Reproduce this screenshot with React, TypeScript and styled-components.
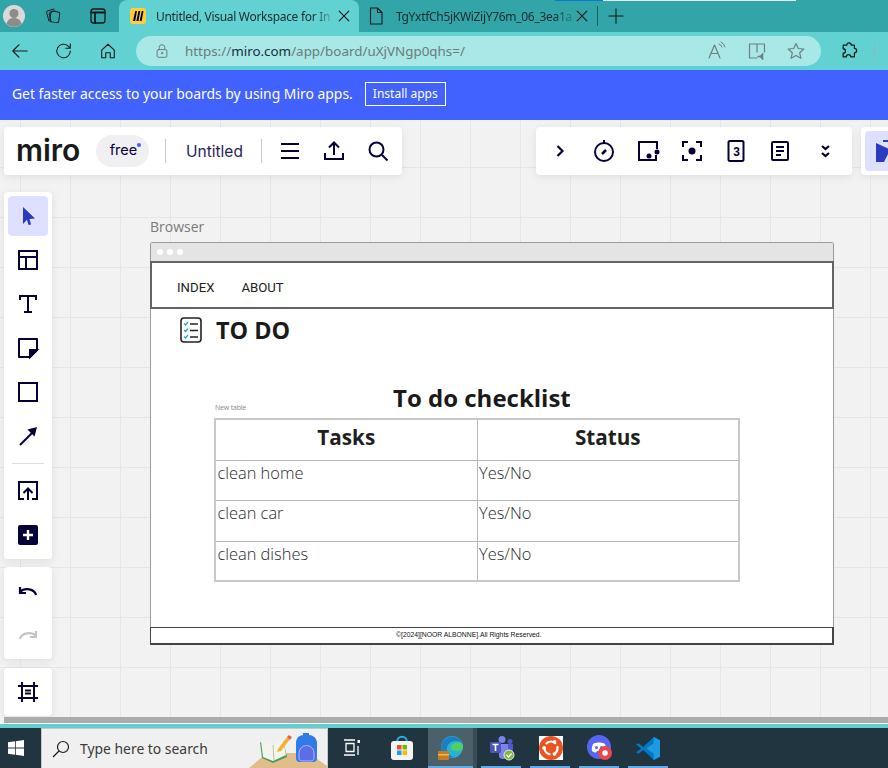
import * as React from 'react';
import styled, { createGlobalStyle } from 'styled-components';

const navy = '#050038';

const GlobalStyle = createGlobalStyle`
  html, body { margin: 0; padding: 0; background: #f2f2f2; }
  * { box-sizing: border-box; }
  table { border-spacing: 0; }
`;

const Screen = styled.div`
  width: 888px;
  height: 768px;
  display: flex;
  flex-direction: column;
  overflow: hidden;
  font-family: 'Open Sans', sans-serif;
`;

/* browser chrome */
const TabStrip = styled.div`
  position: relative;
  height: 32px;
  flex: none;
  display: flex;
  align-items: stretch;
  background: #31a5a8;
`;

const LoadBar = styled.div`
  position: absolute;
  top: 0;
  left: 555px;
  width: 241px;
  height: 1px;
  background: linear-gradient(90deg, #0a78d8 0 48px, #e8e8e8 48px);
`;

const StripButton = styled.div<{ $w: number }>`
  width: ${(p) => p.$w}px;
  flex: none;
  display: flex;
  align-items: center;
  justify-content: center;
`;

const Tab = styled.div<{ $active?: boolean; $w: number; $pl: number }>`
  width: ${(p) => p.$w}px;
  flex: none;
  display: flex;
  align-items: center;
  padding-left: ${(p) => p.$pl}px;
  border-radius: 8px 8px 0 0;
  background: ${(p) => (p.$active ? '#62d1d1' : 'transparent')};
`;

const TabTitle = styled.span`
  margin-left: 10px;
  font-family: 'Noto Sans', sans-serif;
  font-size: 12px;
  letter-spacing: -0.3px;
  color: #1c2a2c;
  white-space: nowrap;
  -webkit-mask-image: linear-gradient(90deg, #000 90%, rgba(0, 0, 0, 0.25));
  mask-image: linear-gradient(90deg, #000 90%, rgba(0, 0, 0, 0.25));
`;

const TabClose = styled.div`
  margin-left: auto;
  margin-right: 9px;
  display: flex;
`;

const StripDivider = styled.div`
  width: 1px;
  height: 20px;
  align-self: center;
  background: #1d5f62;
`;

const ToolBar = styled.div`
  height: 38px;
  flex: none;
  display: flex;
  align-items: center;
  background: #62d1d1;
`;

const NavGroup = styled.div`
  display: flex;
  flex: none;
  margin-left: -2px;
`;

const NavButton = styled.div`
  width: 44px;
  height: 30px;
  flex: none;
  display: flex;
  align-items: center;
  justify-content: center;
`;

const AddressBar = styled.div`
  width: 685px;
  height: 30px;
  margin-left: 6px;
  flex: none;
  display: flex;
  align-items: center;
  padding-left: 19px;
  border-radius: 15px;
  background: #a8e8e6;
`;

const Url = styled.span`
  margin-left: 16px;
  font-family: 'Noto Sans', sans-serif;
  font-size: 13.4px;
  color: #6b7b7b;
  white-space: nowrap;
  b { font-weight: 400; color: #14303a; }
`;

const AddressActions = styled.div`
  margin-left: auto;
  margin-right: 5px;
  display: flex;
`;

const AddressAction = styled.div`
  width: 39.5px;
  display: flex;
  justify-content: center;
`;

const ToolDivider = styled.div`
  width: 1px;
  height: 16px;
  margin-left: -3px;
  background: #8fb8b8;
`;

const Banner = styled.div`
  height: 50px;
  flex: none;
  display: flex;
  align-items: center;
  padding: 0 0 3px 12px;
  background: #4262ff;
  color: #fff;
`;

const BannerText = styled.span`
  font-family: 'Noto Sans', sans-serif;
  font-size: 13.9px;
  white-space: nowrap;
`;

const InstallButton = styled.div`
  width: 81px;
  height: 24px;
  margin-left: 12px;
  display: flex;
  align-items: center;
  justify-content: center;
  border: 1px solid #fff;
  font-family: 'Noto Sans', sans-serif;
  font-size: 12px;
`;

/* board */
const Board = styled.div`
  position: relative;
  flex: 1;
  display: flex;
  flex-direction: column;
  padding: 7px 0 0 4px;
  overflow: hidden;
  background-color: #f2f2f2;
  background-image:
    linear-gradient(#e6e6e6 1px, transparent 1px),
    linear-gradient(90deg, #e6e6e6 1px, transparent 1px);
  background-size: 50px 50px;
  background-position: 20px -3px;
`;

const TopRow = styled.div`
  display: flex;
  flex: none;
  width: 1000px;
`;

const Panel = styled.div`
  display: flex;
  flex: none;
  background: #fff;
  border-radius: 4px;
  box-shadow: 0 2px 8px rgba(5, 0, 56, 0.08);
`;

const TopPanel = styled(Panel)`
  height: 48px;
  align-items: center;
`;

const MainPanel = styled(TopPanel)`
  width: 398px;
  padding-left: 12px;
`;

const MiroLogo = styled.span`
  width: 64px;
  font-family: 'Inter', sans-serif;
  font-size: 30px;
  font-weight: 600;
  letter-spacing: 0;
  color: #1a1a1a;
  line-height: 48px;
  margin-top: -3px;
  white-space: nowrap;
`;

const PlanPill = styled.div`
  position: relative;
  width: 53px;
  height: 32px;
  margin-left: 16px;
  display: flex;
  align-items: center;
  justify-content: center;
  border-radius: 16px;
  background: #f0f0f3;
  font-family: 'Inter', sans-serif;
  font-size: 14.5px;
  color: ${navy};
  padding-left: 2px;
  padding-bottom: 3px;
`;

const PlanDot = styled.i`
  position: absolute;
  top: 8px;
  right: 8px;
  width: 4px;
  height: 4px;
  border-radius: 50%;
  background: #4262ff;
`;

const PanelDivider = styled.div<{ $ml: number; $mr?: number }>`
  width: 1px;
  height: 24px;
  margin-left: ${(p) => p.$ml}px;
  margin-right: ${(p) => p.$mr ?? 0}px;
  background: #c7c7d4;
`;

const BoardName = styled.span`
  width: 58px;
  margin-left: 20px;
  font-family: 'Inter', sans-serif;
  font-size: 15.5px;
  color: #26235a;
  white-space: nowrap;
`;

const IconCell = styled.div`
  width: 44px;
  height: 40px;
  flex: none;
  display: flex;
  align-items: center;
  justify-content: center;
`;

const RightPanel = styled(TopPanel)`
  width: 316px;
  margin-left: 134px;
  padding-left: 2px;
`;

const CollabPanel = styled(TopPanel)`
  width: 120px;
  margin-left: 9px;
  padding-left: 4px;
`;

const SideRail = styled.div`
  display: flex;
  flex-direction: column;
  margin-top: 17px;
  width: 48px;
  flex: none;
`;

const SidePanel = styled(Panel)<{ $mt?: number }>`
  flex-direction: column;
  gap: 4px;
  padding: 4px;
  margin-top: ${(p) => p.$mt ?? 0}px;
`;

const SideTool = styled.div<{ $active?: boolean }>`
  width: 40px;
  height: 40px;
  display: flex;
  align-items: center;
  justify-content: center;
  border-radius: 4px;
  background: ${(p) => (p.$active ? '#dde1ff' : 'transparent')};
`;

const SideDivider = styled.div`
  height: 1px;
  margin: 3px 4px;
  background: #dcdce2;
`;

/* wireframe on the board */
const Widget = styled.div`
  position: absolute;
  left: 150px;
  top: 98px;
  width: 684px;
`;

const WidgetLabel = styled.div`
  height: 24px;
  font-size: 14px;
  line-height: 18px;
  color: #7a7a7a;
`;

const Win = styled.div`
  height: 403px;
  display: flex;
  flex-direction: column;
  background: #fff;
  border: 1px solid #9a9a9a;
  border-radius: 2px 2px 0 0;
`;

const WinTitle = styled.div`
  height: 18px;
  flex: none;
  display: flex;
  align-items: center;
  gap: 4px;
  padding-left: 6px;
  background: #e4e4e4;
`;

const WinDot = styled.i`
  width: 6px;
  height: 6px;
  border-radius: 50%;
  background: #fff;
`;

const WinNav = styled.div`
  height: 48px;
  flex: none;
  display: flex;
  align-items: center;
  gap: 27px;
  padding: 4px 0 0 25px;
  margin: 0 -1px;
  border: 2px solid #646464;
  font-family: Roboto, sans-serif;
  font-size: 13.2px;
  font-weight: 400;
  color: #222;
`;

const WinBody = styled.div`
  flex: 1;
  display: flex;
  flex-direction: column;
  padding: 7px 0 0 29px;
`;

const TodoRow = styled.div`
  display: flex;
  align-items: center;
  gap: 14px;
  height: 28px;
`;

const TodoTitle = styled.h1`
  margin: 0;
  font-size: 23.4px;
  line-height: 28px;
  font-weight: 700;
  color: #1a1a1a;
`;

const TableBlock = styled.div`
  width: 526px;
  margin: 37px 0 0 34px;
`;

const TableHeading = styled.div`
  height: 37px;
  display: flex;
  align-items: flex-end;
`;

const TableNote = styled.span`
  width: 179px;
  flex: none;
  margin-bottom: 6px;
  padding-left: 1px;
  font-size: 7px;
  line-height: 9px;
  color: #8a8a8a;
  letter-spacing: -0.2px;
`;

const TableTitle = styled.span`
  font-size: 24px;
  line-height: 33px;
  margin-bottom: 4px;
  font-weight: 700;
  color: #1a1a1a;
  white-space: nowrap;
`;

const Grid = styled.table`
  width: 526px;
  border-collapse: collapse;
  table-layout: fixed;
  border: 2px solid #c8c8c8;
`;

const Th = styled.th`
  height: 41px;
  padding: 0 0 6px;
  border: 1px solid #b8b8b8;
  font-size: 20.7px;
  line-height: 30px;
  font-weight: 700;
  color: #1f1f1f;
`;

const Td = styled.td<{ $tall?: boolean }>`
  height: ${(p) => (p.$tall ? 41 : 40)}px;
  padding: 0 0 0 1.5px;
  vertical-align: top;
  border: 1px solid #b8b8b8;
  font-size: 16.4px;
  line-height: 24px;
  font-weight: 300;
  color: #2a2a2a;
`;

const WinFooter = styled.div`
  height: 18px;
  flex: none;
  margin: 0 -1px -1px;
  padding: 0 0 2px 245px;
  display: flex;
  align-items: center;
  border: 1px solid #444;
  border-width: 1px 2px 2px 1px;
  font-family: 'Liberation Sans', sans-serif;
  font-size: 6.8px;
  font-weight: 400;
  color: #111;
  white-space: nowrap;
`;

const ScrollTrack = styled.div`
  height: 6px;
  flex: none;
  margin-left: 4px;
  background: #ababab;
`;

const WhiteEdge = styled.div`
  height: 1px;
  flex: none;
  background: #fff;
`;

const TealEdge = styled.div`
  height: 4px;
  flex: none;
  background: #5fcfcf;
`;

/* windows taskbar */
const TaskBar = styled.div`
  height: 40px;
  flex: none;
  display: flex;
  background: #20353f;
`;

const StartButton = styled.div`
  width: 41px;
  display: flex;
  align-items: center;
  flex: none;
  padding-left: 8px;
`;

const SearchBox = styled.div`
  position: relative;
  width: 287px;
  flex: none;
  display: flex;
  align-items: center;
  padding-left: 10px;
  background: #f0f0f0;
  border: 1px solid #c8c8c8;
  border-bottom: 0;
  overflow: hidden;
`;

const SearchText = styled.span`
  margin-left: 10px;
  font-family: 'Noto Sans', sans-serif;
  font-size: 13.9px;
  color: #3a3a3a;
  white-space: nowrap;
`;

const SearchArt = styled.div`
  margin-left: auto;
  display: flex;
  align-self: flex-end;
`;

const TaskButton = styled.div<{ $w: number; $open?: boolean; $active?: boolean }>`
  position: relative;
  width: ${(p) => p.$w}px;
  flex: none;
  display: flex;
  align-items: center;
  justify-content: center;
  background: ${(p) => (p.$active ? '#4c6069' : 'transparent')};
  &::after {
    content: '';
    display: ${(p) => (p.$open ? 'block' : 'none')};
    position: absolute;
    left: ${(p) => (p.$active ? 0 : 4)}px;
    right: ${(p) => (p.$active ? 0 : 5)}px;
    bottom: 0;
    height: 2px;
    background: #62a9e8;
  }
`;

const TaskSeam = styled.div`
  width: 4px;
  flex: none;
  background: #3a4d56;
`;

type IconProps = { size?: number; color?: string; children: React.ReactNode };

const Svg = ({ size = 24, color = navy, children }: IconProps) => (
  <svg width={size} height={size} viewBox="0 0 24 24" fill="none" stroke={color} strokeWidth={2}>
    {children}
  </svg>
);

const ChromeSvg = ({ size = 20, color = '#1a1a1a', children }: IconProps) => (
  <svg width={size} height={size} viewBox="0 0 20 20" fill="none" stroke={color} strokeWidth={1.1} strokeLinecap="round" strokeLinejoin="round">
    {children}
  </svg>
);

const CloseIcon = () => (
  <ChromeSvg size={12}>
    <path d="M2 2l16 16M18 2L2 18" strokeWidth={2} />
  </ChromeSvg>
);

const DocIcon = () => (
  <ChromeSvg size={20}>
    <path d="M4.500 2h7l4.500 4.500V18H4.500zM11.500 2v4.500H16" strokeWidth={1.100} />
  </ChromeSvg>
);

const MiroFavicon = () => (
  <svg width="16" height="16" viewBox="0 0 16 16">
    <rect width="16" height="16" rx="3" fill="#ffd02f" />
    <path d="M3 13L5.200 3h1.800L5.200 13zM6.300 13L8.500 3h1.800L8.500 13zM9.600 13L11.800 3H13.500L11.700 13z" fill="#050038" />
  </svg>
);

const SelectIcon = ({ color }: { color: string }) => (
  <svg width="24" height="24" viewBox="0 0 24 24">
    <path d="M7 3l12 11.500-5.500.6 1.600 5.400-2.600.5-1.500-5.300L7 20z" fill={color} />
  </svg>
);

const CollabIcon = ({ color }: { color: string }) => (
  <svg width="40" height="40" viewBox="0 0 40 40">
    <path d="M11 12l20 9-8 2-4 8-8 0z" fill={color} />
    <path d="M18 10h14" stroke={color} strokeWidth="2" />
  </svg>
);

const App: React.FC = () => (
  <Screen>
    <GlobalStyle />
    <TabStrip>
      <LoadBar />
      <StripButton $w={28}>
        <svg width="22" height="22" viewBox="0 0 22 22">
          <circle cx="11" cy="11" r="11" fill="#d9d9d9" />
          <circle cx="11" cy="8.500" r="4.500" fill="#8c8c8c" />
          <path d="M3.500 19c.8-4 3.800-6 7.500-6s6.700 2 7.500 6a11 11 0 0 1-15 0z" fill="#8c8c8c" />
        </svg>
      </StripButton>
      <StripButton $w={49}>
        <ChromeSvg size={18}>
          <rect x="7" y="5" width="10" height="12" rx="2" transform="rotate(8 12 11)" />
          <path d="M5.500 15.500l-2.500-9a2 2 0 0 1 1.400-2.400l6.600-1.800M8 16.500l-2.200-8.500a2 2 0 0 1 1.400-2.400l5-1.400" />
        </ChromeSvg>
      </StripButton>
      <StripButton $w={42}>
        <ChromeSvg size={20}>
          <rect x="3" y="3" width="14" height="14" rx="2.500" strokeWidth={1.300} />
          <path d="M3 6.500h14M7 6.500V17" strokeWidth={1.800} />
        </ChromeSvg>
      </StripButton>
      <Tab $active $w={240} $pl={11}>
        <MiroFavicon />
        <TabTitle>Untitled, Visual Workspace for In</TabTitle>
        <TabClose><CloseIcon /></TabClose>
      </Tab>
      <Tab $w={238} $pl={7}>
        <DocIcon />
        <TabTitle>TgYxtfCh5jKWiZijY76m_06_3ea1a</TabTitle>
        <TabClose><CloseIcon /></TabClose>
      </Tab>
      <StripDivider />
      <StripButton $w={36}>
        <ChromeSvg size={16}>
          <path d="M10 1v18M1 10h18" strokeWidth={1.300} />
        </ChromeSvg>
      </StripButton>
    </TabStrip>

    <ToolBar>
      <NavGroup>
        <NavButton>
          <ChromeSvg size={18}><path d="M18 10H2M9 3l-7 7 7 7" strokeWidth={1.200} /></ChromeSvg>
        </NavButton>
        <NavButton>
          <ChromeSvg size={18}><path d="M17 10a7.500 7.500 0 1 1-2.300-5.400L17 7M17 2v5h-5" strokeWidth={1.200} /></ChromeSvg>
        </NavButton>
        <NavButton>
          <ChromeSvg size={18}>
            <path d="M3 9l7-6.500L17 9v8.500h-4.500V12h-5v5.500H3z" strokeWidth={1.200} />
          </ChromeSvg>
        </NavButton>
      </NavGroup>
      <AddressBar>
        <ChromeSvg size={14} color="#6b7b7b">
          <rect x="3" y="8" width="14" height="11" rx="2" strokeWidth={1.400} />
          <path d="M6 8V5a4 4 0 0 1 8 0v3" strokeWidth={1.400} />
          <circle cx="10" cy="13" r="1" fill="#6b7b7b" />
        </ChromeSvg>
        <Url>https://<b>miro.com</b>/app/board/uXjVNgp0qhs=/</Url>
        <AddressActions>
          <AddressAction>
            <ChromeSvg size={20} color="#6f7f7f">
              <path d="M2 17L7.500 4l5.500 13M4 12.500h7" strokeWidth={1.200} />
              <path d="M12 3a4 4 0 0 1 3 3M14 1a7 7 0 0 1 4 5" strokeWidth={1} />
            </ChromeSvg>
          </AddressAction>
          <AddressAction>
            <ChromeSvg size={20} color="#6f7f7f">
              <path d="M10 17H2.500V3h15v8M10 3v8" strokeWidth={1.200} />
              <path d="M11 15h2l3-3v7l-3-3h-2z" fill="#6f7f7f" strokeWidth={0.600} />
            </ChromeSvg>
          </AddressAction>
          <AddressAction>
            <ChromeSvg size={20} color="#6f7f7f">
              <path d="M10 2.500l2.300 5 5.500.6-4.100 3.700 1.200 5.400L10 14.500l-4.900 2.700 1.200-5.400L2.200 8.100l5.500-.6z" strokeWidth={1.200} />
            </ChromeSvg>
          </AddressAction>
        </AddressActions>
      </AddressBar>
      <StripButton $w={56}>
        <ChromeSvg size={18}>
          <path d="M7.500 3.500a2.500 2.500 0 0 1 5 0H16v3.500a2.500 2.500 0 0 1 0 5v4.500h-4a2.500 2.500 0 0 0-5 0H3.500v-4a2.500 2.500 0 0 0 0-5V3.500z" strokeWidth={1.400} />
        </ChromeSvg>
      </StripButton>
      <ToolDivider />
    </ToolBar>

    <Banner>
      <BannerText>Get faster access to your boards by using Miro apps.</BannerText>
      <InstallButton>Install apps</InstallButton>
    </Banner>

    <Board>
      <TopRow>
        <MainPanel>
          <MiroLogo>miro</MiroLogo>
          <PlanPill>free<PlanDot /></PlanPill>
          <PanelDivider $ml={16} />
          <BoardName>Untitled</BoardName>
          <PanelDivider $ml={17} $mr={6} />
          <IconCell>
            <Svg><path d="M3 5h18M3 12h18M3 19h18" /></Svg>
          </IconCell>
          <IconCell>
            <Svg><path d="M12 16V4M7 8.500L12 3.500l5 5M3 14v6h18v-6" /></Svg>
          </IconCell>
          <IconCell>
            <Svg><circle cx="10.500" cy="10.500" r="7" /><path d="M15.500 15.500l6 6" /></Svg>
          </IconCell>
        </MainPanel>
        <RightPanel>
          <IconCell>
            <Svg><path d="M9.500 7l5 5-5 5" strokeWidth={2.200} /></Svg>
          </IconCell>
          <IconCell>
            <Svg>
              <circle cx="12" cy="13" r="9" />
              <path d="M12 1v3" />
              <path d="M10 15l4-4" strokeWidth={2.500} />
            </Svg>
          </IconCell>
          <IconCell>
            <Svg>
              <path d="M21 10V3H3v18h17v-5" />
              <circle cx="13" cy="17" r="2.500" fill={navy} stroke="none" />
              <circle cx="21" cy="13" r="2.500" fill={navy} stroke="none" />
            </Svg>
          </IconCell>
          <IconCell>
            <Svg>
              <path d="M3 8V3h5M16 3h5v5M21 16v5h-5M8 21H3v-5" />
              <circle cx="12" cy="12" r="3.500" fill={navy} stroke="none" />
            </Svg>
          </IconCell>
          <IconCell>
            <Svg>
              <rect x="4.500" y="2" width="15" height="20" rx="1.500" />
              <text x="12.500" y="16.500" fontFamily="'Liberation Sans', sans-serif" fontSize="12" fontWeight="700" fill={navy} stroke="none" textAnchor="middle">3</text>
            </Svg>
          </IconCell>
          <IconCell>
            <Svg>
              <rect x="4" y="3" width="16" height="18" rx="1" />
              <path d="M8 8h8M8 12h8M8 16h5" />
            </Svg>
          </IconCell>
          <IconCell>
            <Svg><path d="M10 7l3.500 3L17 7M10 14l3.500 3 3.500-3" strokeWidth={2.200} /></Svg>
          </IconCell>
        </RightPanel>
        <CollabPanel>
          <SideTool $active><CollabIcon color="#2a3bc0" /></SideTool>
        </CollabPanel>
      </TopRow>

      <SideRail>
        <SidePanel>
          <SideTool $active><SelectIcon color="#2a3bc0" /></SideTool>
          <SideTool>
            <Svg><path d="M3 3h18v18H3zM3 9h18M10 9v12" /></Svg>
          </SideTool>
          <SideTool>
            <Svg><path d="M4 8V4h16v4M12 4v16M8 20h8" /></Svg>
          </SideTool>
          <SideTool>
            <Svg>
              <path d="M21 14V3H3v18h11z" strokeLinejoin="round" />
              <path d="M21 14h-7v7z" fill={navy} />
            </Svg>
          </SideTool>
          <SideTool>
            <Svg><rect x="3" y="3" width="18" height="18" /></Svg>
          </SideTool>
          <SideTool>
            <Svg>
              <path d="M4 21L16 9" />
              <path d="M21 3l-9.500 2.500 7 7z" fill={navy} stroke="none" />
            </Svg>
          </SideTool>
          <SideDivider />
          <SideTool>
            <Svg>
              <path d="M8 20H3V3h18v17h-5M12 21V10M7.500 14L12 9.500l4.500 4.500" />
            </Svg>
          </SideTool>
          <SideTool>
            <svg width="20" height="20" viewBox="0 0 20 20">
              <rect width="20" height="20" rx="2" fill={navy} />
              <path d="M10 5v10M5 10h10" stroke="#fff" strokeWidth="2.400" />
            </svg>
          </SideTool>
        </SidePanel>
        <SidePanel $mt={8}>
          <SideTool>
            <Svg><path d="M4 13a9 7 0 0 1 16 3M4 8v6h6" strokeWidth={2.200} /></Svg>
          </SideTool>
          <SideTool>
            <Svg color="#c4c4c8"><path d="M20 13a9 7 0 0 0-16 3M20 8v6h-6" strokeWidth={2.200} /></Svg>
          </SideTool>
        </SidePanel>
        <SidePanel $mt={9}>
          <SideTool>
            <Svg>
              <path d="M6 2v20M18 2v20M2 6h20M2 18h20M9 10.500h6M9 13.500h6" />
            </Svg>
          </SideTool>
        </SidePanel>
      </SideRail>

      <Widget>
        <WidgetLabel>Browser</WidgetLabel>
        <Win>
          <WinTitle><WinDot /><WinDot /><WinDot /></WinTitle>
          <WinNav><span>INDEX</span><span>ABOUT</span></WinNav>
          <WinBody>
            <TodoRow>
              <svg width="22" height="26" viewBox="0 0 22 26" fill="none">
                <rect x="1" y="1" width="20" height="24" rx="3" stroke="#222" strokeWidth="1.600" />
                <path d="M4 6.500l1.500 1.500L8 5M4 13l1.500 1.500L8 11.500M4 19.500l1.500 1.500L8 18" stroke="#2b9fd8" strokeWidth="1.300" />
                <path d="M10 7h8M10 13.500h8M10 20h8" stroke="#222" strokeWidth="1.400" />
              </svg>
              <TodoTitle>TO DO</TodoTitle>
            </TodoRow>
            <TableBlock>
              <TableHeading>
                <TableNote>New table</TableNote>
                <TableTitle>To do checklist</TableTitle>
              </TableHeading>
              <Grid>
                <thead>
                  <tr><Th>Tasks</Th><Th>Status</Th></tr>
                </thead>
                <tbody>
                  <tr><Td>clean home</Td><Td>Yes/No</Td></tr>
                  <tr><Td $tall>clean car</Td><Td $tall>Yes/No</Td></tr>
                  <tr><Td>clean dishes</Td><Td>Yes/No</Td></tr>
                </tbody>
              </Grid>
            </TableBlock>
          </WinBody>
          <WinFooter>©[2024][NOOR ALBONNE].All Rights Reserved.</WinFooter>
        </Win>
      </Widget>
    </Board>

    <ScrollTrack />
    <WhiteEdge />
    <TealEdge />

    <TaskBar>
      <StartButton>
        <svg width="16" height="16" viewBox="0 0 16 16" fill="#fff">
          <path d="M0 2.300l7-1v6.300H0zM7.800 1.200L16 0v7.600H7.800zM0 8.400h7v6.300l-7-1zM7.800 8.400H16V16l-8.200-1.200z" />
        </svg>
      </StartButton>
      <SearchBox>
        <svg width="18" height="18" viewBox="0 0 18 18" fill="none" stroke="#1a1a1a" strokeWidth="1.200">
          <circle cx="11" cy="7" r="5.500" />
          <path d="M7 11l-6 6" />
        </svg>
        <SearchText>Type here to search</SearchText>
        <SearchArt>
          <svg width="78" height="38" viewBox="0 0 78 38">
            <path d="M0 38l18-15h42l18 13v2z" fill="#e2bd8c" />
            <path d="M11 12l13 4 10-6 4 17-14 6-11-5z" fill="#4f9a55" />
            <path d="M12 11l12 4 10-6 3 16-13 6-10-4z" fill="#f3f5ec" />
            <path d="M24 15l1 15" stroke="#b8c4a8" />
            <path d="M29 19l9-12 3 2-9 12-4 1z" fill="#f2b233" />
            <path d="M38 7l2-2 3 2-2 3z" fill="#e8604c" />
            <path d="M47 28V12a8 8 0 0 1 7-7V3h6v2a8 8 0 0 1 8 7v16a4 4 0 0 1-4 4H51a4 4 0 0 1-4-4z" fill="#2f7be8" />
            <path d="M50 29v-6a7.500 7.500 0 0 1 15 0v6a3 3 0 0 1-3 2h-9a3 3 0 0 1-3-2z" fill="#5a6ee8" stroke="#c8a8ff" />
          </svg>
        </SearchArt>
      </SearchBox>
      <TaskButton $w={48}>
        <svg width="18" height="18" viewBox="0 0 18 18" fill="none" stroke="#fff" strokeWidth="1.300">
          <path d="M1 1h11M1 16h11M3 4.500h8v8H3zM15 7v9" />
          <rect x="14.500" y="1" width="2.500" height="3" fill="#fff" stroke="none" />
        </svg>
      </TaskButton>
      <TaskButton $w={52}>
        <svg width="24" height="26" viewBox="0 0 24 26">
          <path d="M7 7c0-7 10-7 10 0" fill="none" stroke="#27aee8" strokeWidth="2" />
          <rect x="1" y="6" width="22" height="19" rx="3" fill="#f4f4f4" />
          <rect x="7" y="10" width="4.500" height="4.500" fill="#e8502e" />
          <rect x="12.500" y="10" width="4.500" height="4.500" fill="#7ab800" />
          <rect x="7" y="15.500" width="4.500" height="4.500" fill="#1d9be8" />
          <rect x="12.500" y="15.500" width="4.500" height="4.500" fill="#fbbc09" />
        </svg>
      </TaskButton>
      <TaskButton $w={45} $open $active>
        <svg width="26" height="26" viewBox="0 0 26 26">
          <circle cx="14" cy="12" r="11" fill="#2bb0d8" />
          <path d="M3 12a11 11 0 0 1 21-4c-4-3-11-3-14 2-3 4 0 11 6 12-7 2-13-3-13-10z" fill="#1b7fc4" />
          <path d="M25 12c0 3-3 4-6 4s-8-1-6-5c1-2 8-6 11-2 1 1 1 2 1 3z" fill="#4cd264" />
          <rect x="0" y="16" width="11" height="9" rx="1" fill="#c97a1e" />
          <rect x="0" y="19" width="11" height="1.500" fill="#f2b94a" />
        </svg>
      </TaskButton>
      <TaskSeam />
      <TaskButton $w={49} $open>
        <svg width="26" height="26" viewBox="0 0 26 26">
          <circle cx="13" cy="4.500" r="3.500" fill="#7b83eb" />
          <circle cx="21" cy="6.500" r="2.500" fill="#5059c9" />
          <path d="M10 9h9v10a5 5 0 0 1-9 3z" fill="#7b83eb" />
          <path d="M19 9h5v8a3 3 0 0 1-5 1z" fill="#5059c9" />
          <rect x="1" y="7" width="11" height="11" rx="1" fill="#4b53bc" />
          <path d="M3.500 9.500h6M6.500 9.500V16" stroke="#fff" strokeWidth="1.600" />
          <circle cx="20" cy="20" r="5" fill="#7fba3c" stroke="#e8e8e8" strokeWidth="1" />
          <path d="M17.500 20l2 2 3-3.500" stroke="#fff" strokeWidth="1.300" fill="none" />
        </svg>
      </TaskButton>
      <TaskButton $w={49} $open>
        <svg width="24" height="24" viewBox="0 0 24 24">
          <rect width="24" height="24" fill="#fff" />
          <circle cx="12" cy="12" r="12" fill="#e95420" />
          <circle cx="12" cy="12" r="6.500" fill="none" stroke="#fff" strokeWidth="2.200" strokeDasharray="11 2.600" strokeDashoffset="3" />
          <circle cx="5" cy="12" r="1.800" fill="#fff" />
          <circle cx="15.500" cy="5.900" r="1.800" fill="#fff" />
          <circle cx="15.500" cy="18.100" r="1.800" fill="#fff" />
        </svg>
      </TaskButton>
      <TaskButton $w={49} $open>
        <svg width="26" height="26" viewBox="0 0 26 26">
          <circle cx="12" cy="12" r="12" fill="#5865f2" />
          <path d="M6 9c3-2 9-2 12 0 1 3 1.500 5 1 7-1.500 1-3 1.500-4 1.500l-1-1.500h-4l-1 1.500c-1 0-2.500-.5-4-1.500-.5-2 0-4 1-7z" fill="#fff" />
          <circle cx="9.500" cy="12.500" r="1.500" fill="#5865f2" />
          <circle cx="14.500" cy="12.500" r="1.500" fill="#5865f2" />
          <circle cx="18" cy="18" r="7" fill="#e8474c" />
          <circle cx="18" cy="18" r="2.800" fill="#fff" />
        </svg>
      </TaskButton>
      <TaskButton $w={49} $open>
        <svg width="25" height="25" viewBox="0 0 24 24">
          <path d="M17 1l6 3v16l-6 3-10-9.500L2.500 17 0 15.500 5 12 0 8.500 2.500 7 7 10.500z" fill="#0078c8" />
          <path d="M17 1l6 3v16l-6 3zM17 7l-7 5 7 5z" fill="#1f9ae0" fillRule="evenodd" />
        </svg>
      </TaskButton>
    </TaskBar>
  </Screen>
);

export default App;
